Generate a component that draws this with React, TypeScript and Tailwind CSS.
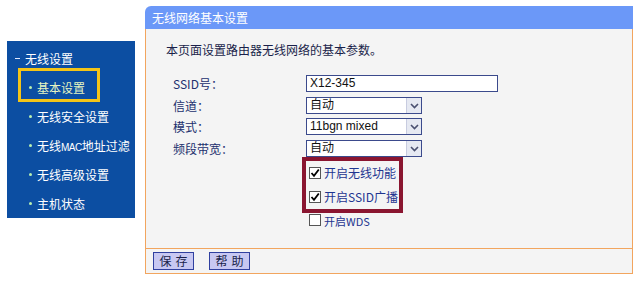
import React from "react";

const font = { fontFamily: '"Noto Sans CJK SC", "Liberation Sans", sans-serif' };

function Chevron() {
  return (
    <svg width="9" height="6" viewBox="0 0 9 6">
      <path d="M1 1 L4.5 4.5 L8 1" fill="none" stroke="#4a5070" strokeWidth="1.6" />
    </svg>
  );
}

function Select({ value }: { value: string }) {
  return (
    <div className="w-[116px] h-[17px] border border-[#3b4a8c] bg-white flex items-stretch">
      <div className="flex-1 pl-[3px] text-[12px] leading-[15px] text-[#111] font-['Liberation_Sans','Noto_Sans_CJK_SC',sans-serif]">
        {value}
      </div>
      <div className="w-[15px] bg-[#e6e9f2] border-l border-[#c8cce0] flex items-center justify-center">
        <Chevron />
      </div>
    </div>
  );
}

function Check({ checked }: { checked: boolean }) {
  return (
    <div className="w-[12px] h-[12px] border border-[#555] bg-white flex items-center justify-center shrink-0">
      {checked && (
        <svg width="10" height="10" viewBox="0 0 10 10">
          <path d="M1.5 5 L4 7.8 L8.8 1.5" fill="none" stroke="#000" strokeWidth="1.8" />
        </svg>
      )}
    </div>
  );
}

function Dot() {
  return <span className="w-[3px] h-[3px] rounded-full bg-[#b8f0b0] mr-[5px] shrink-0" />;
}

export default function App() {
  return (
    <div className="w-[640px] h-[282px] bg-white flex" style={font}>
      {/* Sidebar */}
      <div className="ml-[7px] mt-[41px] w-[128px] h-[177px] bg-[#0c4ea2] pt-[3px] text-white text-[12px] whitespace-nowrap shrink-0">
        <div className="h-[29px] flex items-center pl-[8px]">
          <span className="w-[5px] h-[1.5px] bg-[#e0e8ff] mr-[5px]" />
          <span>无线设置</span>
        </div>
        <div className="h-[29px] flex items-center pl-[22px] relative">
          <div className="absolute left-[11px] top-[-5px] w-[82px] h-[34px] border-[3px] border-[#f4c417]" />
          <Dot />
          <span className="text-[#e6f4c0]">基本设置</span>
        </div>
        <div className="h-[29px] flex items-center pl-[22px]">
          <Dot />
          <span>无线安全设置</span>
        </div>
        <div className="h-[29px] flex items-center pl-[22px]">
          <Dot />
          <span>
            无线<span className="text-[10px] tracking-[-0.5px] font-['Liberation_Sans',sans-serif]">MAC</span>地址过滤
          </span>
        </div>
        <div className="h-[29px] flex items-center pl-[22px]">
          <Dot />
          <span>无线高级设置</span>
        </div>
        <div className="h-[29px] flex items-center pl-[22px]">
          <Dot />
          <span>主机状态</span>
        </div>
      </div>

      {/* Main panel */}
      <div className="ml-[10px] mt-[6px] w-[488px] flex flex-col shrink-0">
        <div className="h-[23px] rounded-tl-[6px] bg-[#6b98f8] text-white text-[12px] leading-[23px] pl-[7px]">
          无线网络基本设置
        </div>
        <div className="h-[219px] border-x border-[#f2a55e] bg-[#f4f4f4] pt-[13px]">
          <div className="pl-[20px] text-[12px] leading-[16px] text-[#1a1f4a]">
            本页面设置路由器无线网络的基本参数。
          </div>
          <div className="mt-[17px] pl-[27px] flex flex-col text-[12px] text-[#22306e]">
            <div className="h-[17px] flex items-center">
              <div className="w-[133px]">SSID号：</div>
              <div className="w-[192px] h-[17px] border border-[#3b4a8c] bg-white pl-[3px] text-[12px] leading-[15px] text-[#111] font-['Liberation_Sans',sans-serif]">
                X12-345
              </div>
            </div>
            <div className="h-[17px] mt-[5px] flex items-center">
              <div className="w-[133px]">信道：</div>
              <Select value="自动" />
            </div>
            <div className="h-[17px] mt-[4px] flex items-center">
              <div className="w-[133px]">模式：</div>
              <Select value="11bgn mixed" />
            </div>
            <div className="h-[17px] mt-[5px] flex items-center">
              <div className="w-[133px]">频段带宽：</div>
              <Select value="自动" />
            </div>
          </div>
          <div className="ml-[156px] flex flex-col text-[12px] text-[#1f3590]">
            <div className="w-[101px] h-[56px] border-[4px] border-[#8a1530] flex flex-col">
              <div className="h-[24px] flex items-center pl-[3px] gap-[3px]">
                <Check checked />
                <span>开启无线功能</span>
              </div>
              <div className="h-[24px] flex items-center pl-[3px] gap-[3px]">
                <Check checked />
                <span>开启SSID广播</span>
              </div>
            </div>
            <div className="h-[14px] flex items-center pl-[7px] gap-[3px]">
              <Check checked={false} />
              <span className="text-[11px] mt-[3px]">开启WDS</span>
            </div>
          </div>
        </div>
        <div className="h-[26px] border border-[#f2a55e] bg-[#f4f4f4] flex items-center pl-[7px] gap-[15px]">
          <div className="w-[41px] h-[18px] bg-[#c8c8f2] border border-[#3040a0] text-[12px] leading-[16px] text-[#1a1f4a] text-center tracking-[4px] pl-[4px]">
            保存
          </div>
          <div className="w-[41px] h-[18px] bg-[#c8c8f2] border border-[#3040a0] text-[12px] leading-[16px] text-[#1a1f4a] text-center tracking-[4px] pl-[4px]">
            帮助
          </div>
        </div>
      </div>
    </div>
  );
}
